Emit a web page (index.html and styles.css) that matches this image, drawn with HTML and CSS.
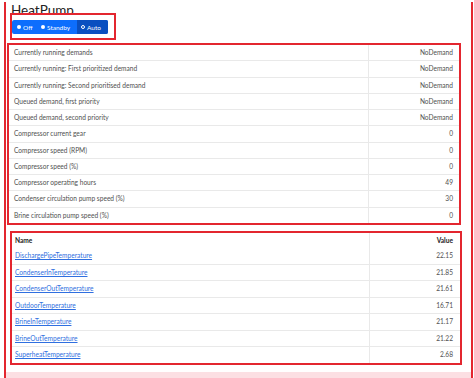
FILE: index.html
```html
<!DOCTYPE html>
<html lang="en">
<head>
  <meta charset="UTF-8">
  <meta name="viewport" content="width=device-width, initial-scale=1.0">
  <title>HeatPump</title>
  <link rel="stylesheet" href="styles.css">
</head>
<body>
  <div class="frame">
    <div class="sheet">
      <h1 class="title">HeatPump</h1>

      <div class="mark mode-mark">
        <div class="btn-group">
          <label class="btn"><span class="dot"></span>Off</label>
          <label class="btn"><span class="dot"></span>Standby</label>
          <label class="btn active"><span class="dot ring"></span>Auto</label>
        </div>
      </div>

      <div class="mark status-mark">
        <table class="data-table status-table">
          <tbody>
            <tr><td>Currently running demands</td><td>NoDemand</td></tr>
            <tr><td>Currently running: First prioritized demand</td><td>NoDemand</td></tr>
            <tr><td>Currently running: Second prioritised demand</td><td>NoDemand</td></tr>
            <tr><td>Queued demand, first priority</td><td>NoDemand</td></tr>
            <tr><td>Queued demand, second priority</td><td>NoDemand</td></tr>
            <tr><td>Compressor current gear</td><td>0</td></tr>
            <tr><td>Compressor speed (RPM)</td><td>0</td></tr>
            <tr><td>Compressor speed (%)</td><td>0</td></tr>
            <tr><td>Compressor operating hours</td><td>49</td></tr>
            <tr><td>Condenser circulation pump speed (%)</td><td>30</td></tr>
            <tr><td>Brine circulation pump speed (%)</td><td>0</td></tr>
          </tbody>
        </table>
      </div>

      <div class="mark sensor-mark">
        <table class="data-table sensor-table">
          <thead>
            <tr><th>Name</th><th>Value</th></tr>
          </thead>
          <tbody>
            <tr><td><a href="#">DischargePipeTemperature</a></td><td>22.15</td></tr>
            <tr><td><a href="#">CondenserInTemperature</a></td><td>21.85</td></tr>
            <tr><td><a href="#">CondenserOutTemperature</a></td><td>21.61</td></tr>
            <tr><td><a href="#">OutdoorTemperature</a></td><td>16.71</td></tr>
            <tr><td><a href="#">BrineInTemperature</a></td><td>21.17</td></tr>
            <tr><td><a href="#">BrineOutTemperature</a></td><td>21.22</td></tr>
            <tr><td><a href="#">SuperheatTemperature</a></td><td>2.68</td></tr>
          </tbody>
        </table>
      </div>
    </div>
  </div>
</body>
</html>
```

FILE: styles.css
```css
/* page frame */
html, body {
  margin: 0;
  padding: 0;
}

body {
  width: 474px;
  height: 378px;
  overflow: hidden;
  font-family: Lato, "Liberation Sans", sans-serif;
  color: #505050;
  background: #fff;
}

.frame {
  height: 378px;
  margin: 0 1px 0 4px;
  border-left: 2px solid #e3262f;
  border-right: 2px solid #e3262f;
  background: #fcdfe3;
  box-sizing: border-box;
}

.sheet {
  height: 370px;
  margin-top: 2px;
  padding: 0 10px 0 3px;
  background: #fff;
  box-sizing: border-box;
  overflow: hidden;
}

.title {
  margin: 0 0 -3px 2px;
  padding-top: 3px;
  font-size: 13.5px;
  font-weight: 400;
  line-height: 11px;
  color: #222;
}

/* red annotation boxes */
.mark {
  border: 2px solid #e3262f;
  box-sizing: border-box;
}

.mode-mark {
  position: relative;
  width: 106px;
  height: 27px;
  margin-left: 1px;
  padding-top: 5px;
  background: #fff;
}

.status-mark {
  margin: 3px 0 0 -2px;
}

.sensor-mark {
  margin: 6px -1px 0 1px;
}

/* button group */
.btn-group {
  display: flex;
  width: max-content;
  height: 14px;
  border-radius: 2px;
  overflow: hidden;
  background: #0d6efd;
}

.btn {
  display: flex;
  align-items: center;
  gap: 2px;
  box-sizing: border-box;
  font-size: 6.5px;
  color: #fff;
}

.btn:first-child {
  width: 26px;
  padding-left: 5px;
}

.btn:nth-child(2) {
  width: 39px;
  padding-left: 3px;
}

.btn.active {
  width: 31px;
  padding-left: 4px;
  background: #0a4fc0;
}

.dot {
  width: 4px;
  height: 4px;
  border-radius: 50%;
  background: #fff;
}

.dot.ring {
  width: 2px;
  height: 2px;
  border: 1.2px solid #fff;
  background: #0a4fc0;
}

/* tables */
.data-table {
  width: 100%;
  border-collapse: collapse;
  table-layout: fixed;
  font-size: 6.6px;
}

.data-table td,
.data-table th {
  padding: 3px 6px 3px 5px;
  line-height: 9.25px;
  text-align: left;
  border-top: 1px solid #e9e9e9;
}

.data-table tr:first-child td,
.data-table thead th {
  border-top: none;
}

.data-table td:last-child,
.data-table th:last-child {
  text-align: right;
  border-left: 1px solid #e9e9e9;
}

.status-table td:first-child {
  width: 348px;
}

.sensor-table th {
  font-weight: 700;
  color: #222;
  padding-top: 3px;
  padding-bottom: 3px;
}

.sensor-table td,
.sensor-table th {
  padding-left: 3px;
  padding-right: 7px;
  line-height: 9.5px;
}

.sensor-table th:first-child {
  width: 347px;
}

.sensor-table tbody td {
  border-top: 1px solid #e9e9e9;
}

.sensor-table a {
  color: #2f6fe0;
  text-decoration: underline;
}
```
